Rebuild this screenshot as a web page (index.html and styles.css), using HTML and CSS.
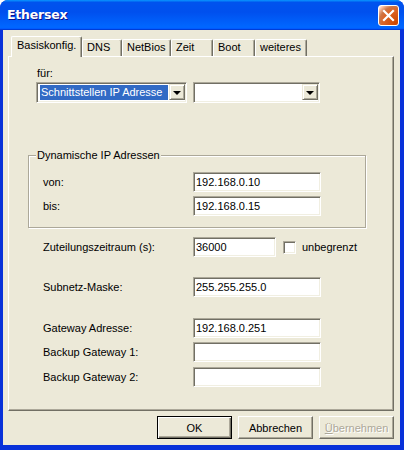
FILE: index.html
```html
<!DOCTYPE html>
<html lang="de">
<head>
<meta charset="utf-8">
<title>Ethersex</title>
<link rel="stylesheet" href="styles.css">
</head>
<body>
<div class="window">
  <div class="titlebar">
    <span class="title">Ethersex</span>
    <span class="close">
      <svg width="13" height="13" viewBox="0 0 13 13"><path d="M2 2 L11 11 M11 2 L2 11" stroke="#fff" stroke-width="2.2" stroke-linecap="square"/></svg>
    </span>
  </div>
  <div class="client">
    <div class="tabs">
      <div class="tab selected t-basis">Basiskonfig.</div>
      <div class="tab t-dns">DNS</div>
      <div class="tab t-netbios">NetBios</div>
      <div class="tab t-zeit">Zeit</div>
      <div class="tab t-boot">Boot</div>
      <div class="tab t-weiteres">weiteres</div>
    </div>
    <div class="pane">
      <div class="fuer">
        <div class="fuer-label">für:</div>
        <div class="combos">
          <div class="combo combo-main">
            <span class="combo-text highlighted">Schnittstellen IP Adresse</span>
            <span class="combo-btn"><span class="arrow"></span></span>
          </div>
          <div class="combo combo-side">
            <span class="combo-text"></span>
            <span class="combo-btn"><span class="arrow"></span></span>
          </div>
        </div>
      </div>

      <div class="group">
        <div class="legend">Dynamische IP Adressen</div>
        <div class="row row-first">
          <span class="row-label">von:</span>
          <span class="edit">192.168.0.10</span>
        </div>
        <div class="row row-tight">
          <span class="row-label">bis:</span>
          <span class="edit">192.168.0.15</span>
        </div>
      </div>

      <div class="row outer row-lease">
        <span class="row-label">Zuteilungszeitraum (s):</span>
        <span class="edit edit-short">36000</span>
        <span class="checkbox"></span>
        <span class="check-label">unbegrenzt</span>
      </div>
      <div class="row outer row-mask">
        <span class="row-label">Subnetz-Maske:</span>
        <span class="edit">255.255.255.0</span>
      </div>
      <div class="row outer row-gw">
        <span class="row-label">Gateway Adresse:</span>
        <span class="edit">192.168.0.251</span>
      </div>
      <div class="row outer row-tight">
        <span class="row-label">Backup Gateway 1:</span>
        <span class="edit"></span>
      </div>
      <div class="row outer row-tight2">
        <span class="row-label">Backup Gateway 2:</span>
        <span class="edit"></span>
      </div>
    </div>
    <div class="buttons">
      <div class="btn default">OK</div>
      <div class="btn">Abbrechen</div>
      <div class="btn disabled"><u>Ü</u>bernehmen</div>
    </div>
  </div>
</div>
</body>
</html>
```
FILE: styles.css
```css
html, body {
  margin: 0;
  padding: 0;
  background: #ffffff;
}

body {
  font-family: "Liberation Sans", Arial, sans-serif;
  font-size: 11px;
  color: #000;
}

.window {
  width: 404px;
  height: 450px;
  background: #0831d9;
  border-radius: 8px 8px 0 0;
  overflow: hidden;
  display: flex;
  flex-direction: column;
}

.titlebar {
  height: 30px;
  flex: none;
  display: flex;
  align-items: center;
  justify-content: space-between;
  padding: 0 5px 0 7px;
  background: linear-gradient(180deg, #0997ff 0%, #0053ee 8%, #0050ee 40%, #0066ff 88%, #0066ff 93%, #005bff 95%, #003dd7 96%, #003dd7 100%);
}

.title {
  color: #fff;
  font-family: "DejaVu Sans", "Liberation Sans", sans-serif;
  font-weight: bold;
  font-size: 12.5px;
  letter-spacing: -0.2px;
  text-shadow: 1px 1px 0 #0f1089;
  padding-bottom: 1px;
}

.close {
  width: 21px;
  height: 21px;
  box-sizing: border-box;
  border: 1px solid #fff;
  border-radius: 3px;
  background: radial-gradient(circle at 90% 90%, #cc4600 0, #dc6527 55%, #cd7546 70%, #ffccb2 90%, #fff 100%);
  display: flex;
  align-items: center;
  justify-content: center;
}

.client {
  flex: 1;
  margin: 0 4px 5px 3px;
  background: #ece9d8;
  padding: 6px 6px 6px 5px;
  display: flex;
  flex-direction: column;
}

/* Tabs */
.tabs {
  height: 20px;
  flex: none;
  display: flex;
  align-items: flex-end;
  padding-left: 3px;
}

.tab {
  box-sizing: border-box;
  height: 17px;
  padding-left: 4px;
  line-height: 15px;
  border-top: 1px solid #fff;
  border-left: 1px solid #fff;
  border-right: 1px solid #716f64;
  box-shadow: inset -1px 0 0 #aca899;
  border-radius: 2px 2px 0 0;
  white-space: nowrap;
}

.tab.selected {
  height: 21px;
  margin-bottom: -1px;
  padding-left: 5px;
  line-height: 17px;
  background: #ece9d8;
  position: relative;
  z-index: 1;
}

.t-basis { width: 71px; }
.t-dns { width: 40px; }
.t-netbios { width: 49px; }
.t-zeit { width: 42px; }
.t-boot { width: 42px; }
.t-weiteres { width: 52px; }

.pane {
  flex: 1;
  box-sizing: border-box;
  border-top: 1px solid #fff;
  border-left: 1px solid #fff;
  border-right: 1px solid #716f64;
  border-bottom: 1px solid #716f64;
  box-shadow: inset -1px -1px 0 #aca899;
}

/* für */
.fuer {
  margin-left: 27px;
  padding-top: 10px;
}

.fuer-label {
  line-height: 13px;
  margin-left: 1px;
}

.combos {
  display: flex;
  gap: 6px;
  margin-top: 2px;
}

.combo {
  box-sizing: border-box;
  height: 21px;
  display: flex;
  background: #fff;
  border-top: 1px solid #aca899;
  border-left: 1px solid #aca899;
  border-right: 1px solid #fff;
  border-bottom: 1px solid #fff;
  box-shadow: inset 1px 1px 0 #716f64, inset -1px -1px 0 #f1efe2;
  padding: 2px 1px 1px 2px;
}

.combo-main { width: 151px; }
.combo-side { width: 127px; }

.combo-text {
  flex: 1;
  line-height: 15px;
  padding-left: 1px;
  margin: 0 1px 1px 1px;
  white-space: nowrap;
  overflow: hidden;
}

.combo-text.highlighted {
  background: #316ac5;
  color: #fff;
}

.combo-btn {
  box-sizing: border-box;
  width: 16px;
  height: 16px;
  margin-top: -1px;
  background: #ece9d8;
  border-top: 1px solid #ece9d8;
  border-left: 1px solid #ece9d8;
  border-right: 1px solid #716f64;
  border-bottom: 1px solid #716f64;
  box-shadow: inset 1px 1px 0 #fff, inset -1px -1px 0 #aca899;
  display: flex;
  align-items: center;
  justify-content: center;
}

.arrow {
  width: 0;
  height: 0;
  border-left: 4px solid transparent;
  border-right: 4px solid transparent;
  border-top: 4px solid #000;
  margin-top: 1px;
}

/* group box */
.group {
  margin: 52px 0 0 19px;
  width: 338px;
  box-sizing: border-box;
  border: 1px solid #aca899;
  box-shadow: inset 1px 1px 0 #fff, 1px 1px 0 #fff;
  padding: 0 0 11px 14px;
}

.legend {
  margin: -7px 0 0 -7px;
  width: fit-content;
  padding: 0 1px;
  line-height: 13px;
  background: #ece9d8;
}

/* rows */
.row {
  display: flex;
  align-items: center;
  height: 20px;
}

.row.outer {
  margin-left: 34px;
}

.row-first { margin-top: 10px; }
.row-tight { margin-top: 4px; }
.row-tight2 { margin-top: 5px; }
.row-lease { margin-top: 9px; }
.row-mask { margin-top: 20px; }
.row-gw { margin-top: 21px; }

.row-label {
  width: 150px;
  flex: none;
  white-space: nowrap;
}

.edit {
  box-sizing: border-box;
  width: 128px;
  height: 20px;
  background: #fff;
  border-top: 1px solid #aca899;
  border-left: 1px solid #aca899;
  border-right: 1px solid #fff;
  border-bottom: 1px solid #fff;
  box-shadow: inset 1px 1px 0 #716f64, inset -1px -1px 0 #f1efe2;
  padding-left: 2px;
  line-height: 18px;
  white-space: nowrap;
}

.edit-short {
  width: 83px;
}

.checkbox {
  box-sizing: border-box;
  width: 13px;
  height: 13px;
  margin-left: 7px;
  background: #fff;
  border-top: 1px solid #aca899;
  border-left: 1px solid #aca899;
  border-right: 1px solid #fff;
  border-bottom: 1px solid #fff;
  box-shadow: inset 1px 1px 0 #716f64, inset -1px -1px 0 #f1efe2;
}

.check-label {
  margin-left: 6px;
}

/* buttons */
.buttons {
  flex: none;
  display: flex;
  justify-content: flex-end;
  gap: 6px;
  margin-top: 5px;
}

.btn {
  box-sizing: border-box;
  width: 75px;
  height: 23px;
  display: flex;
  align-items: center;
  justify-content: center;
  background: #ece9d8;
  border-top: 1px solid #fff;
  border-left: 1px solid #fff;
  border-right: 1px solid #716f64;
  border-bottom: 1px solid #716f64;
  box-shadow: inset -1px -1px 0 #aca899;
}

.btn.default {
  border: 1px solid #000;
  box-shadow: inset 1px 1px 0 #fff, inset -1px -1px 0 #716f64, inset -2px -2px 0 #aca899;
}

.btn.disabled {
  color: #aca899;
  text-shadow: 1px 1px 0 #fff;
}

.btn.disabled u {
  text-decoration: underline;
}
```
